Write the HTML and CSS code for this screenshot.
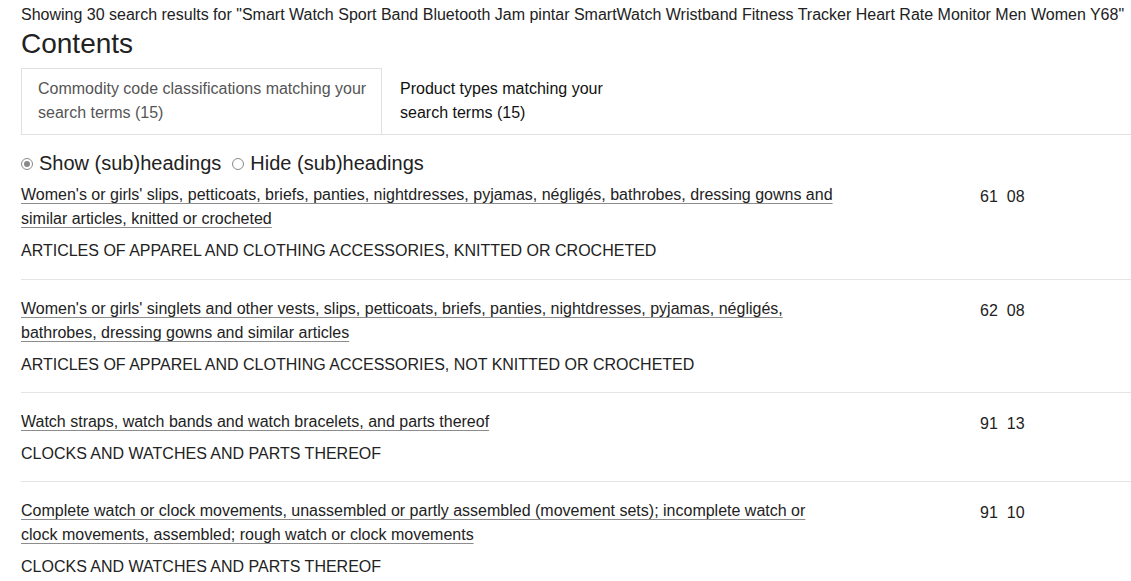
FILE: index.html
```html
<!DOCTYPE html>
<html lang="en">
<head>
<meta charset="utf-8">
<title>Search results</title>
<link rel="stylesheet" href="styles.css">
</head>
<body>
<main class="page">
  <p class="summary">Showing 30 search results for "Smart Watch Sport Band Bluetooth Jam pintar SmartWatch Wristband Fitness Tracker Heart Rate Monitor Men Women Y68"</p>
  <h1 class="title">Contents</h1>
  <nav class="tabs">
    <div class="tab tab-active">Commodity code classifications matching your search terms (15)</div>
    <div class="tab tab-plain">Product types matching your search terms (15)</div>
  </nav>
  <div class="toggle">
    <label class="opt"><span class="radio radio-on"></span>Show (sub)headings</label>
    <label class="opt"><span class="radio"></span>Hide (sub)headings</label>
  </div>
  <ul class="results">
    <li class="item">
      <div class="text">
        <a class="link" href="#">Women's or girls' slips, petticoats, briefs, panties, nightdresses, pyjamas, négligés, bathrobes, dressing gowns and similar articles, knitted or crocheted</a>
        <div class="chapter">ARTICLES OF APPAREL AND CLOTHING ACCESSORIES, KNITTED OR CROCHETED</div>
      </div>
      <div class="code"><span>61</span><span>08</span></div>
    </li>
    <li class="item">
      <div class="text">
        <a class="link" href="#">Women's or girls' singlets and other vests, slips, petticoats, briefs, panties, nightdresses, pyjamas, négligés, bathrobes, dressing gowns and similar articles</a>
        <div class="chapter">ARTICLES OF APPAREL AND CLOTHING ACCESSORIES, NOT KNITTED OR CROCHETED</div>
      </div>
      <div class="code"><span>62</span><span>08</span></div>
    </li>
    <li class="item">
      <div class="text">
        <a class="link" href="#">Watch straps, watch bands and watch bracelets, and parts thereof</a>
        <div class="chapter">CLOCKS AND WATCHES AND PARTS THEREOF</div>
      </div>
      <div class="code"><span>91</span><span>13</span></div>
    </li>
    <li class="item">
      <div class="text">
        <a class="link" href="#">Complete watch or clock movements, unassembled or partly assembled (movement sets); incomplete watch or clock movements, assembled; rough watch or clock movements</a>
        <div class="chapter">CLOCKS AND WATCHES AND PARTS THEREOF</div>
      </div>
      <div class="code"><span>91</span><span>10</span></div>
    </li>
  </ul>
</main>
</body>
</html>
```

FILE: styles.css
```css
html, body {
  margin: 0;
  padding: 0;
  background: #fff;
}
body {
  font-family: "Liberation Sans", Arial, sans-serif;
  color: #222;
  overflow: hidden;
}
.page {
  padding: 3px 0 0 21px;
}
.summary {
  margin: 0;
  font-size: 16px;
  line-height: 24px;
  white-space: nowrap;
}
.title {
  margin: 0 0 7px;
  font-size: 28px;
  font-weight: normal;
  line-height: 34px;
}
.tabs {
  display: flex;
  border-bottom: 1px solid #e0e0e0;
}
.tab {
  font-size: 16px;
  line-height: 24px;
  padding: 8px 12px 9px 16px;
  box-sizing: border-box;
}
.tab-active {
  width: 361px;
  border: 1px solid #e0e0e0;
  border-bottom: none;
  color: #555;
}
.tab-plain {
  width: 260px;
  padding-left: 18px;
  color: #111;
  padding-top: 9px;
  padding-bottom: 8px;
}
.toggle {
  display: flex;
  gap: 11px;
  margin-top: 14px;
  font-size: 20px;
  line-height: 28px;
}
.opt {
  display: inline-flex;
  align-items: center;
  gap: 6px;
}
.radio {
  width: 12px;
  height: 12px;
  border: 1px solid #8a8a8a;
  border-radius: 50%;
  box-sizing: border-box;
  display: inline-block;
  position: relative;
  top: 1px;
}
.radio-on::after {
  content: "";
  position: absolute;
  left: 2px;
  top: 2px;
  width: 6px;
  height: 6px;
  border-radius: 50%;
  background: #8a8a8a;
}
.results {
  list-style: none;
  margin: 0;
  padding: 0;
}
.item {
  display: grid;
  grid-template-columns: 820px auto;
  column-gap: 139px;
  padding: 17px 0 15px;
  border-top: 1px solid #e5e5e5;
}
.item:first-child {
  border-top: none;
  padding-top: 6px;
  padding-bottom: 16px;
}
.link {
  font-size: 16px;
  line-height: 24px;
  color: #222;
  text-decoration: underline;
  text-decoration-color: #8c8c8c;
  text-decoration-thickness: 1px;
  text-underline-offset: 3px;
}
.chapter {
  margin-top: 8px;
  font-size: 16px;
  line-height: 24px;
  color: #222;
}
.code {
  display: flex;
  gap: 9px;
  font-size: 16px;
  line-height: 24px;
  padding-top: 2px;
  color: #222;
}
```
